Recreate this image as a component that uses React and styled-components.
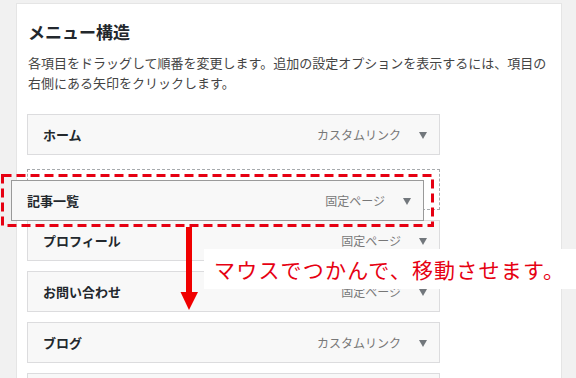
import React from "react";
import styled, { createGlobalStyle } from "styled-components";

const GlobalStyle = createGlobalStyle`
  html, body {
    margin: 0;
    padding: 0;
    background: #f1f1f1;
    font-family: "Noto Sans CJK JP", "Noto Sans", sans-serif;
    color: #23282d;
  }
`;

const Page = styled.div`
  position: relative;
  width: 576px;
  height: 378px;
  overflow: hidden;
  padding: 3px 14px 0 16px;
  box-sizing: border-box;
`;

const Panel = styled.div`
  background: #fff;
  border: 1px solid #e5e5e5;
  border-bottom: none;
  padding: 0 10px;
  height: 100%;
  box-sizing: border-box;
`;

const Title = styled.h3`
  margin: 16px 0 0 1px;
  font-size: 17px;
  line-height: 24px;
  font-weight: 700;
  color: #23282d;
`;

const Description = styled.p`
  margin: 9px 0 0 1px;
  font-size: 13px;
  line-height: 19.5px;
  color: #444;
`;

const List = styled.div`
  margin-top: 22px;
  display: flex;
  flex-direction: column;
  gap: 10px;
`;

const Item = styled.div`
  width: 413px;
  height: 41px;
  box-sizing: border-box;
  border: 1px solid ${(p) => (p.$lifted ? "#9a9a9a" : "#dcdcde")};
  background: #f8f8f8;
  display: flex;
  align-items: center;
  padding: 0 12px 0 15px;
`;

const Placeholder = styled.div`
  width: 413px;
  height: 41px;
  box-sizing: border-box;
  border: 1px dashed #a7aaad;
  margin-top: 4px;
`;

const ItemTitle = styled.span`
  flex: 1;
  font-size: 13px;
  font-weight: 700;
  color: #23282d;
`;

const ItemType = styled.span`
  font-size: 12px;
  color: #777;
  margin-right: 18px;
`;

const Caret = styled.span`
  width: 0;
  height: 0;
  border-left: 4px solid transparent;
  border-right: 4px solid transparent;
  border-top: 7px solid #72777c;
  margin-top: 1px;
`;

const Lifted = styled.div`
  position: absolute;
  left: 11px;
  top: 180px;
`;

const Overlay = styled.svg`
  position: absolute;
  left: 0;
  top: 0;
  pointer-events: none;
`;

const Callout = styled.div`
  position: absolute;
  left: 204px;
  right: 0;
  top: 249px;
  height: 40px;
  background: #fff;
  display: flex;
  align-items: center;
  padding-left: 10px;
  font-size: 21px;
  letter-spacing: 1.2px;
  color: #e60012;
  white-space: nowrap;
`;

const items = [
  { title: "ホーム", type: "カスタムリンク" },
  "placeholder",
  { title: "プロフィール", type: "固定ページ" },
  { title: "お問い合わせ", type: "固定ページ" },
  { title: "ブログ", type: "カスタムリンク" },
  { title: "", type: "" },
];

const MenuItem = ({ title, type, lifted }) => (
  <Item $lifted={lifted}>
    <ItemTitle>{title}</ItemTitle>
    {type && <ItemType>{type}</ItemType>}
    {type && <Caret />}
  </Item>
);

export default function App() {
  return (
    <>
      <GlobalStyle />
      <Page>
        <Panel>
          <Title>メニュー構造</Title>
          <Description>
            各項目をドラッグして順番を変更します。追加の設定オプションを表示するには、項目の右側にある矢印をクリックします。
          </Description>
          <List>
            {items.map((it, i) =>
              it === "placeholder" ? (
                <Placeholder key={i} />
              ) : (
                <MenuItem key={i} title={it.title} type={it.type} />
              )
            )}
          </List>
        </Panel>

        <Lifted>
          <MenuItem title="記事一覧" type="固定ページ" lifted />
        </Lifted>

        <Overlay width="576" height="378" viewBox="0 0 576 378">
          <rect
            x="2.5"
            y="175.5"
            width="430"
            height="50"
            fill="none"
            stroke="#e60012"
            strokeWidth="3"
            strokeDasharray="9 5"
          />
          <rect x="186" y="227" width="6" height="66" fill="#f00000" />
          <polygon points="180.5,292 198,292 189,310" fill="#f00000" />
        </Overlay>

        <Callout>マウスでつかんで、移動させます。</Callout>
      </Page>
    </>
  );
}
